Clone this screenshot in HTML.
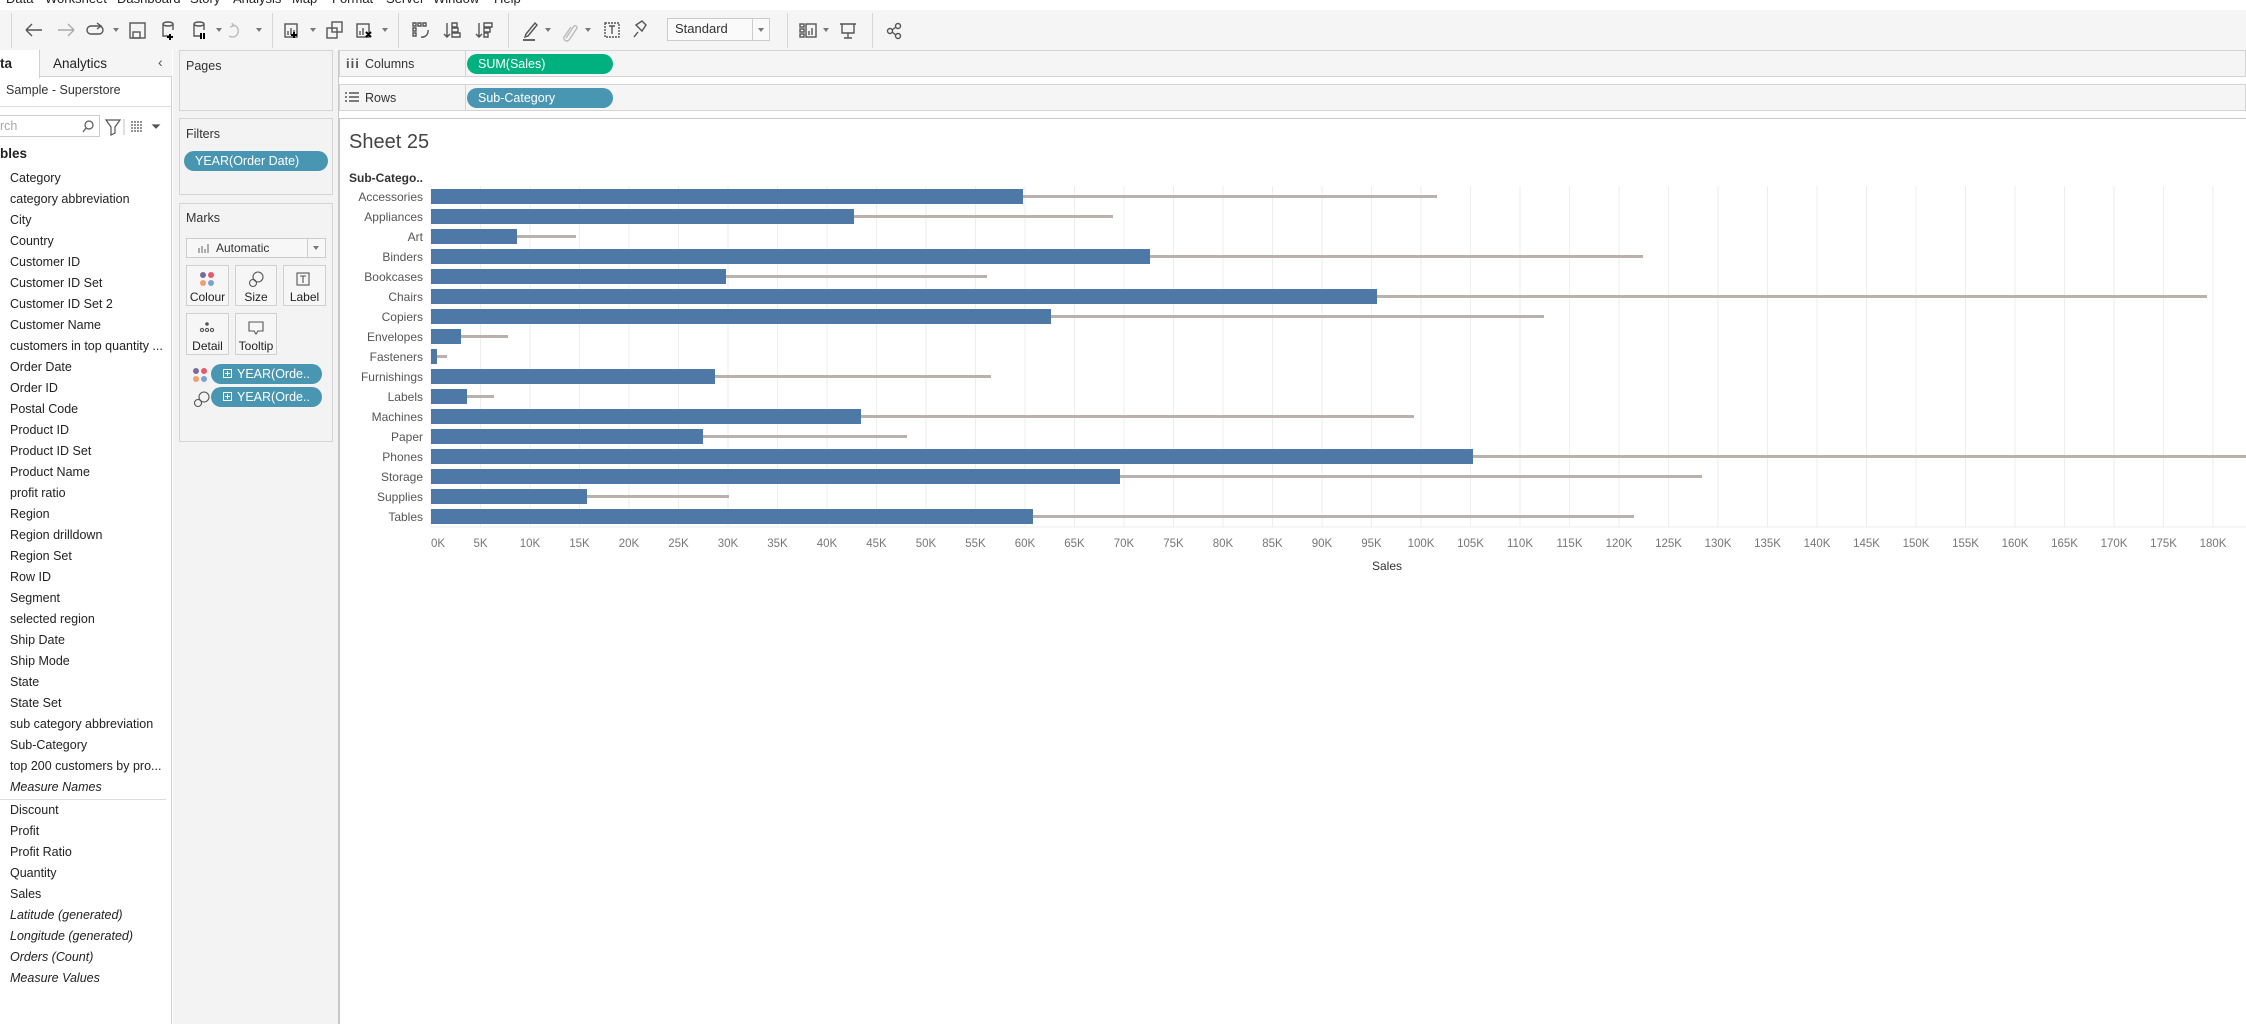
<!DOCTYPE html>
<html><head><meta charset="utf-8">
<style>
*{margin:0;padding:0;box-sizing:border-box}
body{width:2246px;height:1024px;overflow:hidden;background:#fff;font-family:"Liberation Sans",sans-serif;color:#333;position:relative}
.a{position:absolute}
.t{position:absolute;white-space:nowrap}
.fld{position:absolute;left:10px;font-size:12.5px;color:#222;white-space:nowrap;line-height:14px}
.it{font-style:italic}
.card{position:absolute;background:#f3f3f3;border:1px solid #d4d4d4}
.pill{position:absolute;border-radius:10px;color:#fff;font-size:12.5px;line-height:20px;white-space:nowrap}
.btn{position:absolute;border:1px solid #d0d0d0;background:#f6f6f6;font-size:12px;color:#222;text-align:center}
.sep{position:absolute;top:13px;width:1px;height:35px;background:#d6d6d6}
.dd{position:absolute;top:28px;width:0;height:0;border-left:3px solid transparent;border-right:3px solid transparent;border-top:4px solid #777}
</style></head><body>

<!-- menu bar -->
<div class="a" style="left:0;top:0;width:2246px;height:10px;background:#fff"></div>
<div class="t" style="top:-9px;left:6px;font-size:13px;color:#222">Data</div>
<div class="t" style="top:-9px;left:45px;font-size:13px;color:#222">Worksheet</div>
<div class="t" style="top:-9px;left:117px;font-size:13px;color:#222">Dashboard</div>
<div class="t" style="top:-9px;left:190px;font-size:13px;color:#222">Story</div>
<div class="t" style="top:-9px;left:233px;font-size:13px;color:#222">Analysis</div>
<div class="t" style="top:-9px;left:292px;font-size:13px;color:#222">Map</div>
<div class="t" style="top:-9px;left:332px;font-size:13px;color:#222">Format</div>
<div class="t" style="top:-9px;left:386px;font-size:13px;color:#222">Server</div>
<div class="t" style="top:-9px;left:433px;font-size:13px;color:#222">Window</div>
<div class="t" style="top:-9px;left:494px;font-size:13px;color:#222">Help</div>

<!-- toolbar -->
<div class="a" style="left:0;top:10px;width:2246px;height:40px;background:#f5f5f5"></div>
<div class="sep" style="left:11px"></div><div class="sep" style="left:272px"></div><div class="sep" style="left:398px"></div><div class="sep" style="left:508px"></div><div class="sep" style="left:787px"></div><div class="sep" style="left:872px"></div>
<svg class="a" style="left:0;top:10px" width="940" height="40" fill="none" stroke-width="1.4">
 <g stroke="#555"><path d="M26 20h16M26 20l6-6M26 20l6 6"/></g>
 <g stroke="#aaa"><path d="M58 20h16M74 20l-6-6M74 20l-6 6"/></g>
 <g stroke="#555"><rect x="87" y="16" width="16" height="8" rx="4"/><path d="M97 13l4 3-4 3"/>
 <rect x="130" y="13" width="15" height="15"/><rect x="133" y="22" width="7" height="6"/>
 <path d="M163 14v12h6M163 14a5 2 0 0 1 10 0v6M163 14a5 2 0 0 0 10 0"/>
 <path d="M194 14v12h6M194 14a5 2 0 0 1 10 0v6M194 14a5 2 0 0 0 10 0"/>
 <rect x="285" y="14" width="12" height="13"/><path d="M288 25v-4M291 25v-7M294 25v-5"/>
 <rect x="327" y="18" width="10" height="10"/><rect x="332" y="12" width="10" height="10"/>
 <rect x="357" y="14" width="12" height="13"/><path d="M360 25v-4M363 25v-7"/>
 <path d="M413 13h3v3h-3zM418 13h3v3h-3zM423 13h3v3h-3zM413 18h3v3h-3zM413 23h3v3h-3z"/><path d="M421 27a6 6 0 0 0 7-7"/>
 <path d="M447 13v14M444 24l3 3 3-3M452 13h5v4h-5zM452 18h6v4h-6zM452 23h8v4h-8z"/>
 <path d="M479 13v14M476 24l3 3 3-3M484 13h8v4h-8zM484 18h6v4h-6zM484 23h4v4h-4z"/>
 <path d="M525 27l3-1 9-11-2-2-9 11z"/><path d="M523 30h12" stroke="#666" stroke-width="2"/>
 <rect x="605" y="13" width="14" height="14" stroke-dasharray="2 1"/><path d="M609 16h6M612 16v8"/>
 <path d="M634 27l4-5M636 15l6-4 4 4-4 6z"/>
 <rect x="800" y="14" width="4" height="3"/><rect x="800" y="19" width="4" height="3"/><rect x="800" y="24" width="4" height="3"/><rect x="806" y="14" width="10" height="13"/><path d="M809 25v-4M812 25v-7"/>
 <path d="M840 14h16M842 14v9h12v-9M848 23v5M844 28h8"/>
 <circle cx="890" cy="21" r="2.5"/><circle cx="898" cy="16" r="2.5"/><circle cx="898" cy="26" r="2.5"/><path d="M892 20l4-3M892 22l4 3"/></g>
 <g stroke="#000" stroke-width="2"><path d="M170 24v6M167 27h6M201 23v6M204 23v6M294 22v6M291 25h6M366 22l5 5M371 22l-5 5"/></g>
 <g stroke="#bbb"><path d="M566 28l8-12a2 2 0 0 1 3 2l-8 12a3 3 0 0 1-5-3l7-10"/><path d="M232 15a6 6 0 1 1-3 11M232 13l1 3-3 1"/></g>
</svg>
<div class="dd" style="left:113px"></div><div class="dd" style="left:216px"></div><div class="dd" style="left:256px"></div><div class="dd" style="left:310px"></div><div class="dd" style="left:382px"></div><div class="dd" style="left:545px"></div><div class="dd" style="left:585px"></div><div class="dd" style="left:823px"></div>
<div class="a" style="left:667px;top:18px;width:103px;height:23px;border:1px solid #ccc;background:#fafafa"></div>
<div class="t" style="left:675px;top:21px;font-size:13px;color:#333">Standard</div>
<div class="a" style="left:752px;top:19px;width:1px;height:21px;background:#ccc"></div>
<div class="dd" style="left:758px;top:28px"></div>

<!-- left pane -->
<div class="a" style="left:0;top:50px;width:172px;height:974px;background:#fff;border-right:1px solid #d0d0d0"></div>
<div class="a" style="left:0;top:50px;width:172px;height:27px;border-bottom:1px solid #d0d0d0;background:#f5f5f5"></div>
<div class="a" style="left:0;top:50px;width:40px;height:28px;background:#fff;border-right:1px solid #d0d0d0"></div>
<div class="t" style="left:0;top:56px;font-size:13.5px;font-weight:bold;color:#222">ta</div>
<div class="t" style="left:53px;top:56px;font-size:13.5px;color:#222">Analytics</div>
<div class="t" style="left:158px;top:54px;font-size:14px;color:#555">‹</div>
<div class="t" style="left:6px;top:83px;font-size:12.5px;color:#333">Sample - Superstore</div>
<div class="a" style="left:0;top:106px;width:172px;height:1px;background:#ddd"></div>
<div class="a" style="left:-2px;top:115px;width:102px;height:22px;border:1px solid #ccc;background:#fff"></div>
<div class="t" style="left:0;top:119px;font-size:12.5px;color:#aaa">rch</div>
<svg class="a" style="left:80px;top:117px" width="90" height="20" fill="none" stroke="#555" stroke-width="1.2"><circle cx="9" cy="8" r="4"/><path d="M6 11l-3 4"/><path d="M26 3h14l-5 7v6l-4 2v-8z"/><path d="M44 2v16" stroke="#ccc"/><path d="M51 5h12M51 8h12M51 11h12M51 14h12" stroke-dasharray="2 1"/><path d="M73 8l3 3 3-3z" fill="#555"/></svg>
<div class="t" style="left:0;top:146px;font-size:13.5px;font-weight:bold;color:#222">bles</div>

<div class="fld" style="top:171px">Category</div>
<div class="fld" style="top:192px">category abbreviation</div>
<div class="fld" style="top:213px">City</div>
<div class="fld" style="top:234px">Country</div>
<div class="fld" style="top:255px">Customer ID</div>
<div class="fld" style="top:276px">Customer ID Set</div>
<div class="fld" style="top:297px">Customer ID Set 2</div>
<div class="fld" style="top:318px">Customer Name</div>
<div class="fld" style="top:339px">customers in top quantity ...</div>
<div class="fld" style="top:360px">Order Date</div>
<div class="fld" style="top:381px">Order ID</div>
<div class="fld" style="top:402px">Postal Code</div>
<div class="fld" style="top:423px">Product ID</div>
<div class="fld" style="top:444px">Product ID Set</div>
<div class="fld" style="top:465px">Product Name</div>
<div class="fld" style="top:486px">profit ratio</div>
<div class="fld" style="top:507px">Region</div>
<div class="fld" style="top:528px">Region drilldown</div>
<div class="fld" style="top:549px">Region Set</div>
<div class="fld" style="top:570px">Row ID</div>
<div class="fld" style="top:591px">Segment</div>
<div class="fld" style="top:612px">selected region</div>
<div class="fld" style="top:633px">Ship Date</div>
<div class="fld" style="top:654px">Ship Mode</div>
<div class="fld" style="top:675px">State</div>
<div class="fld" style="top:696px">State Set</div>
<div class="fld" style="top:717px">sub category abbreviation</div>
<div class="fld" style="top:738px">Sub-Category</div>
<div class="fld" style="top:759px">top 200 customers by pro...</div>
<div class="fld it" style="top:780px">Measure Names</div>
<div class="a" style="left:0;top:799px;width:166px;height:1px;background:#ddd"></div>
<div class="fld" style="top:803px">Discount</div>
<div class="fld" style="top:824px">Profit</div>
<div class="fld" style="top:845px">Profit Ratio</div>
<div class="fld" style="top:866px">Quantity</div>
<div class="fld" style="top:887px">Sales</div>
<div class="fld it" style="top:908px">Latitude (generated)</div>
<div class="fld it" style="top:929px">Longitude (generated)</div>
<div class="fld it" style="top:950px">Orders (Count)</div>
<div class="fld it" style="top:971px">Measure Values</div>

<!-- middle column -->
<div class="a" style="left:173px;top:50px;width:166px;height:974px;background:#f3f3f3;border-right:1px solid #c8c8c8"></div>
<div class="card" style="left:179px;top:50px;width:154px;height:61px"></div>
<div class="t" style="left:186px;top:59px;font-size:12.5px;color:#333">Pages</div>
<div class="card" style="left:179px;top:118px;width:154px;height:77px"></div>
<div class="t" style="left:186px;top:127px;font-size:12.5px;color:#333">Filters</div>
<div class="pill" style="left:184px;top:151px;width:144px;background:#4996b2;padding-left:11px">YEAR(Order Date)</div>
<div class="card" style="left:179px;top:203px;width:154px;height:239px"></div>
<div class="t" style="left:186px;top:211px;font-size:12.5px;color:#333">Marks</div>
<div class="a" style="left:186px;top:238px;width:140px;height:20px;border:1px solid #ccc;background:#f7f7f7"></div>
<div class="a" style="left:307px;top:239px;width:1px;height:18px;background:#ccc"></div>
<div class="dd" style="left:313px;top:246px"></div>
<svg class="a" style="left:198px;top:242px" width="12" height="12"><path d="M1 11V6M4 11V4M7 11V7M10 11V2" stroke="#999" stroke-width="1.6"/></svg>
<div class="t" style="left:216px;top:241px;font-size:12px;color:#333">Automatic</div>
<div class="btn" style="left:186px;top:265px;width:43px;height:41px"><div style="margin-top:24px">Colour</div></div>
<div class="btn" style="left:235px;top:265px;width:42px;height:41px"><div style="margin-top:24px">Size</div></div>
<div class="btn" style="left:283px;top:265px;width:43px;height:41px"><div style="margin-top:24px">Label</div></div>
<div class="btn" style="left:186px;top:313px;width:43px;height:42px"><div style="margin-top:25px">Detail</div></div>
<div class="btn" style="left:235px;top:313px;width:42px;height:42px"><div style="margin-top:25px">Tooltip</div></div>
<svg class="a" style="left:170px;top:225px" width="170" height="220" fill="none" stroke="#555" stroke-width="1.1">
 <g stroke="none"><circle cx="33" cy="50" r="3" fill="#7a6a9a"/><circle cx="41" cy="50" r="3" fill="#e45a6b"/><circle cx="33" cy="58" r="3" fill="#f0a070"/><circle cx="41" cy="58" r="3" fill="#7ba3d1"/>
 <circle cx="26" cy="146" r="3" fill="#7a6a9a"/><circle cx="34" cy="146" r="3" fill="#e45a6b"/><circle cx="26" cy="154" r="3" fill="#f0a070"/><circle cx="34" cy="154" r="3" fill="#7ba3d1"/>
 <circle cx="37" cy="99" r="1.8" fill="#555"/></g>
 <circle cx="88" cy="52" r="5"/><circle cx="83" cy="58" r="3.5"/>
 <circle cx="34" cy="172" r="5"/><circle cx="28" cy="178" r="3.5"/>
 <rect x="127" y="48" width="12" height="12"/><path d="M130 51h6M133 51v7"/>
 <circle cx="32" cy="105" r="1.6"/><circle cx="37" cy="105" r="1.6"/><circle cx="42" cy="105" r="1.6"/>
 <path d="M79 97h14v9h-5l-2 3-2-3h-5z"/>
</svg>
<div class="pill" style="left:211px;top:364px;width:111px;background:#4996b2;padding-left:26px">YEAR(Orde..</div>
<div class="pill" style="left:211px;top:387px;width:111px;background:#4996b2;padding-left:26px">YEAR(Orde..</div>
<div class="a" style="left:223px;top:369px;width:9px;height:9px;border:1px solid #fff"></div><div class="a" style="left:225px;top:373px;width:5px;height:1px;background:#fff"></div><div class="a" style="left:227px;top:371px;width:1px;height:5px;background:#fff"></div>
<div class="a" style="left:223px;top:392px;width:9px;height:9px;border:1px solid #fff"></div><div class="a" style="left:225px;top:396px;width:5px;height:1px;background:#fff"></div><div class="a" style="left:227px;top:394px;width:1px;height:5px;background:#fff"></div>

<!-- shelves -->
<div class="a" style="left:339px;top:50px;width:1907px;height:27px;background:#f5f5f5;border:1px solid #d4d4d4"></div>
<div class="a" style="left:339px;top:84px;width:1907px;height:27px;background:#f5f5f5;border:1px solid #d4d4d4"></div>
<div class="a" style="left:465px;top:50px;width:1px;height:27px;background:#d4d4d4"></div>
<div class="a" style="left:465px;top:84px;width:1px;height:27px;background:#d4d4d4"></div>
<div class="t" style="left:346px;top:56px;font-size:13px;font-weight:bold;color:#555;letter-spacing:1px">iii</div>
<div class="t" style="left:365px;top:57px;font-size:12.5px;color:#333">Columns</div>
<svg class="a" style="left:345px;top:91px" width="14" height="12" stroke="#555" stroke-width="1.4"><path d="M0 2h2M4 2h10M0 6h2M4 6h10M0 10h2M4 10h10"/></svg>
<div class="t" style="left:365px;top:91px;font-size:12.5px;color:#333">Rows</div>
<div class="pill" style="left:467px;top:54px;width:146px;background:#00b180;padding-left:11px">SUM(Sales)</div>
<div class="pill" style="left:467px;top:88px;width:146px;background:#4996b2;padding-left:11px">Sub-Category</div>

<!-- viz -->
<div class="a" style="left:339px;top:118px;width:1907px;height:906px;background:#fff;border-top:1px solid #c8c8c8;border-left:1px solid #c8c8c8"></div>
<div class="t" style="left:349px;top:131px;font-size:20px;color:#444">Sheet 25</div>
<div class="t" style="left:349px;top:171px;font-size:12px;font-weight:bold;color:#333">Sub-Catego..</div>

<svg class="a" style="left:0;top:0" width="2246" height="1024" font-family="Liberation Sans, sans-serif">
<g stroke="#eeeeee" stroke-width="1">
<path d="M431 186V527M480.5 186V527M530 186V527M579.5 186V527M629 186V527M678.5 186V527M728 186V527M777.5 186V527M827 186V527M876.5 186V527M926 186V527M975.5 186V527M1025 186V527M1074.5 186V527M1124 186V527M1173.5 186V527M1223 186V527M1272.5 186V527M1322 186V527M1371.5 186V527M1421 186V527M1470.5 186V527M1520 186V527M1569.5 186V527M1619 186V527M1668.5 186V527M1718 186V527M1767.5 186V527M1817 186V527M1866.5 186V527M1916 186V527M1965.5 186V527M2015 186V527M2064.5 186V527M2114 186V527M2163.5 186V527M2213 186V527"/>
<path d="M431 527H2246"/>
</g>
<g fill="#4e79a7">
<rect x="431" y="189" width="592" height="15"/>
<rect x="431" y="209" width="423" height="15"/>
<rect x="431" y="229" width="86" height="15"/>
<rect x="431" y="249" width="719" height="15"/>
<rect x="431" y="269" width="295" height="15"/>
<rect x="431" y="289" width="946" height="15"/>
<rect x="431" y="309" width="620" height="15"/>
<rect x="431" y="329" width="30" height="15"/>
<rect x="431" y="349" width="6" height="15"/>
<rect x="431" y="369" width="284" height="15"/>
<rect x="431" y="389" width="36" height="15"/>
<rect x="431" y="409" width="430" height="15"/>
<rect x="431" y="429" width="272" height="15"/>
<rect x="431" y="449" width="1042" height="15"/>
<rect x="431" y="469" width="689" height="15"/>
<rect x="431" y="489" width="156" height="15"/>
<rect x="431" y="509" width="602" height="15"/>
</g>
<g fill="#bab0ac">
<rect x="1023" y="195" width="414" height="3"/>
<rect x="854" y="215" width="259" height="3"/>
<rect x="517" y="235" width="59" height="3"/>
<rect x="1150" y="255" width="493" height="3"/>
<rect x="726" y="275" width="261" height="3"/>
<rect x="1377" y="295" width="830" height="3"/>
<rect x="1051" y="315" width="493" height="3"/>
<rect x="461" y="335" width="47" height="3"/>
<rect x="437" y="355" width="10" height="3"/>
<rect x="715" y="375" width="276" height="3"/>
<rect x="467" y="395" width="27" height="3"/>
<rect x="861" y="415" width="553" height="3"/>
<rect x="703" y="435" width="204" height="3"/>
<rect x="1473" y="455" width="773" height="3"/>
<rect x="1120" y="475" width="582" height="3"/>
<rect x="587" y="495" width="142" height="3"/>
<rect x="1033" y="515" width="601" height="3"/>
</g>
<g font-size="12" fill="#555" text-anchor="end">
<text x="423" y="201">Accessories</text><text x="423" y="221">Appliances</text><text x="423" y="241">Art</text><text x="423" y="261">Binders</text><text x="423" y="281">Bookcases</text><text x="423" y="301">Chairs</text><text x="423" y="321">Copiers</text><text x="423" y="341">Envelopes</text><text x="423" y="361">Fasteners</text><text x="423" y="381">Furnishings</text><text x="423" y="401">Labels</text><text x="423" y="421">Machines</text><text x="423" y="441">Paper</text><text x="423" y="461">Phones</text><text x="423" y="481">Storage</text><text x="423" y="501">Supplies</text><text x="423" y="521">Tables</text>
</g>
<g font-size="11.5" fill="#777" text-anchor="middle">
<text x="438" y="547">0K</text><text x="480.5" y="547">5K</text><text x="530" y="547">10K</text><text x="579.5" y="547">15K</text><text x="629" y="547">20K</text><text x="678.5" y="547">25K</text><text x="728" y="547">30K</text><text x="777.5" y="547">35K</text><text x="827" y="547">40K</text><text x="876.5" y="547">45K</text><text x="926" y="547">50K</text><text x="975.5" y="547">55K</text><text x="1025" y="547">60K</text><text x="1074.5" y="547">65K</text><text x="1124" y="547">70K</text><text x="1173.5" y="547">75K</text><text x="1223" y="547">80K</text><text x="1272.5" y="547">85K</text><text x="1322" y="547">90K</text><text x="1371.5" y="547">95K</text><text x="1421" y="547">100K</text><text x="1470.5" y="547">105K</text><text x="1520" y="547">110K</text><text x="1569.5" y="547">115K</text><text x="1619" y="547">120K</text><text x="1668.5" y="547">125K</text><text x="1718" y="547">130K</text><text x="1767.5" y="547">135K</text><text x="1817" y="547">140K</text><text x="1866.5" y="547">145K</text><text x="1916" y="547">150K</text><text x="1965.5" y="547">155K</text><text x="2015" y="547">160K</text><text x="2064.5" y="547">165K</text><text x="2114" y="547">170K</text><text x="2163.5" y="547">175K</text><text x="2213" y="547">180K</text>
</g>
<text x="1387" y="570" font-size="12" fill="#333" text-anchor="middle">Sales</text>
</svg>
</body></html>
